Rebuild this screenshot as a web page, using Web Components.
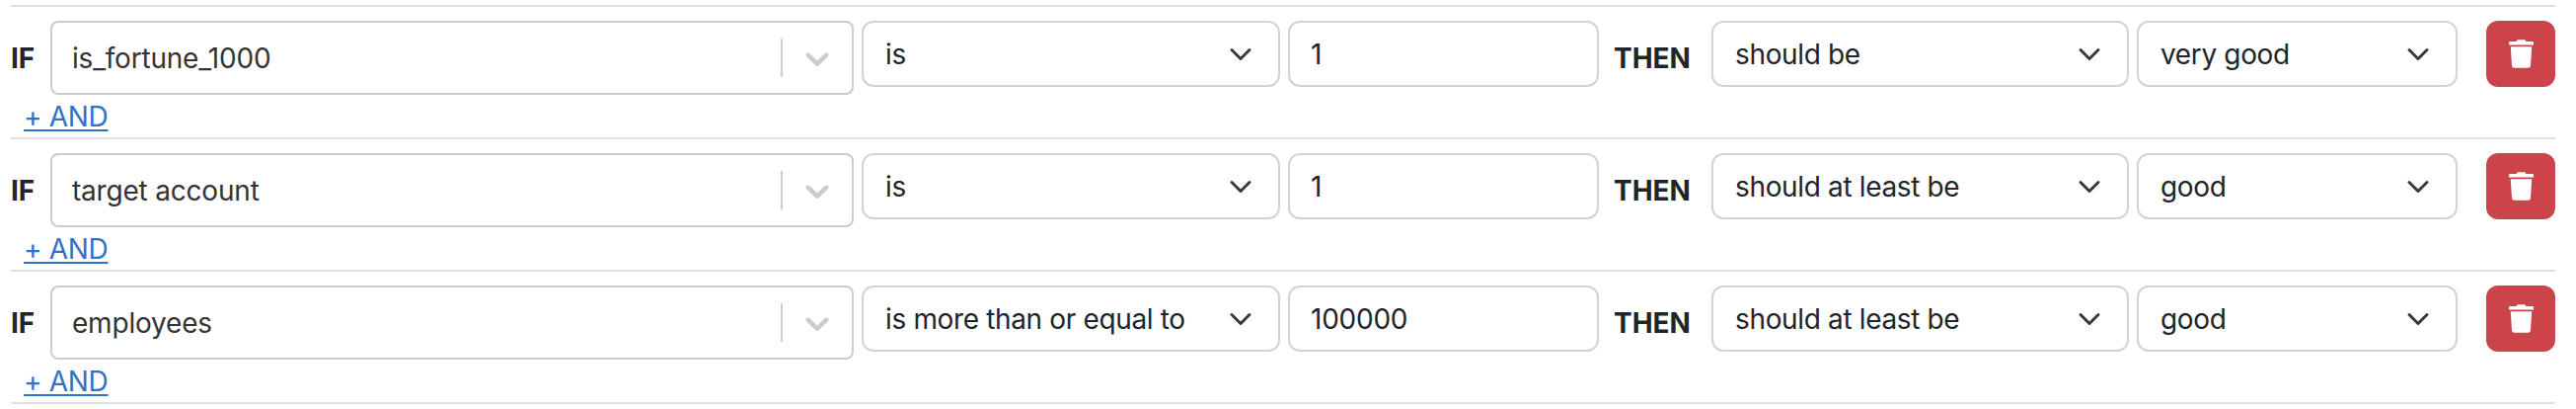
<!DOCTYPE html>
<html>
<head>
<meta charset="utf-8">
<title>Rules</title>
<style>
  html, body { margin: 0; background: #fff; }
  body {
    padding: 5px 21px 0 11px;
    font-family: Inter, "Liberation Sans", sans-serif;
    font-size: 28px;
    color: #212529;
  }
</style>
</head>
<body>
  <rule-list>
    <rule-row field="is_fortune_1000" op="is" value="1" verb="should be" grade="very good"></rule-row>
    <rule-row field="target account" op="is" value="1" verb="should at least be" grade="good"></rule-row>
    <rule-row field="employees" op="is more than or equal to" value="100000" verb="should at least be" grade="good"></rule-row>
  </rule-list>

<script>
class RuleList extends HTMLElement {
  constructor() {
    super();
    this.root = this.attachShadow({ mode: 'open' });
    this.root.innerHTML = `
      <style>
        :host { display: block; border-top: 2px solid #dee2e6; }
      </style>
      <slot></slot>
    `;
  }
}

class ComboSelect extends HTMLElement {
  constructor() {
    super();
    this.root = this.attachShadow({ mode: 'open' });
    this.root.innerHTML = `
      <style>
        :host {
          display: flex;
          align-items: center;
          box-sizing: border-box;
          height: 75px;
          border: 2px solid #ccc;
          border-radius: 8px;
          background: #fff;
          color: #333;
          letter-spacing: -0.2px;
        }
        .value { flex: 1; padding-left: 20px; }
        .sep { width: 2px; height: 39px; background: #ccc; }
        svg { display: block; margin: 0 15px; fill: #ccc; }
      </style>
      <div class="value"><slot></slot></div>
      <div class="sep"></div>
      <svg width="40" height="40" viewBox="0 0 20 20">
        <path d="M4.516 7.548c0.436-0.446 1.043-0.481 1.576 0l3.908 3.747 3.908-3.747c0.533-0.481 1.141-0.446 1.574 0 0.436 0.445 0.408 1.197 0 1.615-0.406 0.418-4.695 4.502-4.695 4.502-0.217 0.223-0.502 0.335-0.787 0.335s-0.57-0.112-0.789-0.335c0 0-4.287-4.084-4.695-4.502s-0.436-1.17 0-1.615z"></path>
      </svg>
    `;
  }
}

class FormSelect extends HTMLElement {
  constructor() {
    super();
    this.root = this.attachShadow({ mode: 'open' });
    this.root.innerHTML = `
      <style>
        :host {
          display: flex;
          align-items: center;
          justify-content: space-between;
          box-sizing: border-box;
          height: 67px;
          padding: 0 22px 0 22px;
          border: 2px solid #ced4da;
          border-radius: 12px;
          background: #fff;
          letter-spacing: -0.35px;
        }
        svg { display: block; fill: none; stroke: #343a40; stroke-width: 2; stroke-linecap: round; stroke-linejoin: round; }
      </style>
      <span><slot></slot></span>
      <svg width="32" height="24" viewBox="0 0 16 16"><path d="m2 5 6 6 6-6"></path></svg>
    `;
  }
}

class FormInput extends HTMLElement {
  constructor() {
    super();
    this.root = this.attachShadow({ mode: 'open' });
    this.root.innerHTML = `
      <style>
        :host {
          display: flex;
          align-items: center;
          box-sizing: border-box;
          height: 67px;
          padding: 0 21px;
          border: 2px solid #ced4da;
          border-radius: 12px;
          background: #fff;
          letter-spacing: -0.25px;
        }
      </style>
      <slot></slot>
    `;
  }
}

class DeleteButton extends HTMLElement {
  constructor() {
    super();
    this.root = this.attachShadow({ mode: 'open' });
    this.root.innerHTML = `
      <style>
        :host {
          display: flex;
          align-items: center;
          justify-content: center;
          height: 67px;
          border-radius: 12px;
          background: #cb444a;
          cursor: pointer;
        }
        svg { display: block; fill: #fff; }
      </style>
      <svg width="25" height="29" viewBox="0 0 448 512">
        <path d="M432 32H312l-9.4-18.7A24 24 0 0 0 281.1 0H166.8a23.72 23.72 0 0 0-21.4 13.3L136 32H16A16 16 0 0 0 0 48v32a16 16 0 0 0 16 16h416a16 16 0 0 0 16-16V48a16 16 0 0 0-16-16zM53.2 467a48 48 0 0 0 47.9 45h245.8a48 48 0 0 0 47.9-45L416 128H32z"></path>
      </svg>
    `;
  }
}

class RuleRow extends HTMLElement {
  constructor() {
    super();
    this.root = this.attachShadow({ mode: 'open' });
  }

  connectedCallback() {
    const attr = (name) => this.getAttribute(name);
    this.root.innerHTML = `
      <style>
        :host {
          display: block;
          box-sizing: border-box;
          height: 134px;
          padding-top: 14px;
          border-bottom: 2px solid #dee2e6;
        }
        .fields {
          display: grid;
          grid-template-columns: 32px 814px 424px 315px 98px 423px 325px 91px;
          column-gap: 8px;
          align-items: start;
        }
        .word {
          height: 75px;
          display: flex;
          align-items: center;
          font-weight: 700;
          white-space: nowrap;
        }
        .then { padding-left: 7px; }
        .delete { margin-left: 21px; width: 70px; }
        a {
          display: inline-block;
          margin: 5px 0 0 13px;
          color: #2f72c8;
          letter-spacing: -0.3px;
          text-decoration: underline;
          text-underline-offset: 3px;
        }
      </style>
      <div class="fields">
        <div class="word">IF</div>
        <combo-select>${attr('field')}</combo-select>
        <form-select>${attr('op')}</form-select>
        <form-input>${attr('value')}</form-input>
        <div class="word then">THEN</div>
        <form-select>${attr('verb')}</form-select>
        <form-select>${attr('grade')}</form-select>
        <delete-button class="delete"></delete-button>
      </div>
      <a href="#">+ AND</a>
    `;
  }
}

customElements.define('rule-list', RuleList);
customElements.define('combo-select', ComboSelect);
customElements.define('form-select', FormSelect);
customElements.define('form-input', FormInput);
customElements.define('delete-button', DeleteButton);
customElements.define('rule-row', RuleRow);
</script>
</body>
</html>
